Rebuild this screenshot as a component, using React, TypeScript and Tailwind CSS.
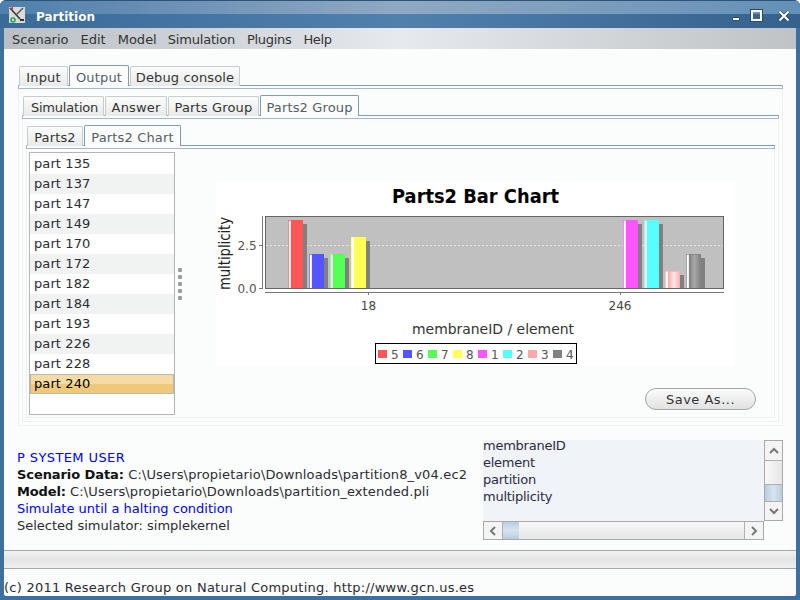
import React from "react";

const font = { fontFamily: '"DejaVu Sans", sans-serif' };

function Tab({ label, active, w, tight }: { label: string; active?: boolean; w: number; tight?: boolean }) {
  return (
    <div
      style={{ width: w }}
      className={
        active
          ? "h-[21px] pt-[3px] flex items-center justify-center rounded-t-[2px] border border-b-0 border-[#7f9bb6] bg-[#fbfdfd] text-[13px] text-[#555c66] relative z-10"
          : "h-[20px] mt-[1px] pt-[2px] flex items-center justify-center rounded-t-[2px] border border-b-0 border-[#c8cccc] bg-gradient-to-b from-[#fbfcfc] to-[#e8eaea] text-[13px] text-[#333]"
      }
    >
      <span className={tight ? "tracking-[-0.2px] pl-[2px]" : "tracking-[0.15px]"}>{label}</span>
    </div>
  );
}

function Panel({ children }: { children: React.ReactNode }) {
  return (
    <div className="border-x border-b border-[#eef1f1]">
      <div className="h-[4px] -mx-[1px] border border-b-0 border-t-[#7f9bb6] border-x-[#a9b9c8] bg-[#fbfdfd] shadow-[inset_0_-1px_0_#a5b8cb]" />
      {children}
    </div>
  );
}

const rows = ["135", "137", "147", "149", "170", "172", "182", "184", "193", "226", "228", "240"];

type Bar = { x: number; top: number; c: string; id: string };
const bars: Bar[] = [
  { x: 288, top: 220, c: "#ff5555", id: "a" },
  { x: 309, top: 254, c: "#5555ff", id: "b" },
  { x: 330, top: 254, c: "#55ff55", id: "c" },
  { x: 351, top: 237, c: "#ffff55", id: "d" },
  { x: 623, top: 220, c: "#ff55ff", id: "e" },
  { x: 644, top: 220, c: "#55ffff", id: "f" },
  { x: 665, top: 271, c: "#ffaaaa", id: "g" },
  { x: 686, top: 254, c: "#808080", id: "h" },
];
const legend = [
  ["5", "#ff5555"],
  ["6", "#5555ff"],
  ["7", "#55ff55"],
  ["8", "#ffff55"],
  ["1", "#ff55ff"],
  ["2", "#55ffff"],
  ["3", "#ffaaaa"],
  ["4", "#808080"],
];

function Chart() {
  return (
    <svg width={519} height={184} viewBox="216 182 519 184" className="block bg-white" style={font}>
      <defs>
        {bars.map((b) => (
          <linearGradient key={b.id} id={b.id} x1="0" x2="1" y1="0" y2="0">
            <stop offset="0" stopColor={b.c} stopOpacity="0.7" />
            <stop offset="0.07" stopColor={b.c} stopOpacity="0.7" />
            <stop offset="0.1" stopColor="#ffffff" />
            <stop offset="0.16" stopColor="#ffffff" />
            <stop offset="0.22" stopColor={b.c} />
            {b.id === "g" ? <stop offset="0.6" stopColor="#ffe8e8" /> : null}
            {b.id === "h" ? <stop offset="0.55" stopColor="#a8a8a8" /> : null}
            <stop offset="1" stopColor={b.c} />
          </linearGradient>
        ))}
      </defs>
      <text x="392" y="203" fontSize="20" fontWeight="700" fill="#000" textLength="167" lengthAdjust="spacingAndGlyphs">
        Parts2 Bar Chart
      </text>
      <rect x="265.5" y="216.5" width="458" height="72" fill="#c0c0c0" stroke="#666" />
      <line x1="266" x2="723" y1="245.5" y2="245.5" stroke="#e6e6e6" strokeDasharray="2 2" />
      <line x1="262.5" x2="262.5" y1="216" y2="289" stroke="#777" />
      <line x1="259" x2="262" y1="245.5" y2="245.5" stroke="#777" />
      <line x1="259" x2="262" y1="288.5" y2="288.5" stroke="#777" />
      <line x1="265" x2="724" y1="292.5" y2="292.5" stroke="#777" />
      <line x1="368.5" x2="368.5" y1="292" y2="295" stroke="#777" />
      <line x1="620.5" x2="620.5" y1="292" y2="295" stroke="#777" />
      {bars.map((b) => (
        <g key={b.id}>
          <rect x={b.x + 15} y={b.top + 4} width={4} height={288 - b.top - 4} fill="#808080" />
          <rect x={b.x} y={b.top} width={15} height={288 - b.top} fill="#ffffff" />
          <rect x={b.x} y={b.top} width={15} height={288 - b.top} fill={`url(#${b.id})`} />
          <rect x={b.x} y={b.top} width={15} height={1} fill={b.c} opacity="0.6" />
        </g>
      ))}
      <text x="247" y="250" fontSize="12" textAnchor="middle" fill="#555">2.5</text>
      <text x="247" y="293" fontSize="12" textAnchor="middle" fill="#555">0.0</text>
      <text x="368.5" y="310" fontSize="12" textAnchor="middle" fill="#444">18</text>
      <text x="620" y="310" fontSize="12" textAnchor="middle" fill="#444">246</text>
      <text
        transform="translate(230 290) rotate(-90)"
        fontSize="16"
        fill="#222"
        textLength="73"
        lengthAdjust="spacingAndGlyphs"
      >
        multiplicity
      </text>
      <text x="412" y="334" fontSize="14" fill="#333" textLength="162" lengthAdjust="spacingAndGlyphs">
        membraneID / element
      </text>
      <rect x="375.5" y="343.5" width="201" height="20" fill="#fff" stroke="#000" />
      {legend.map(([t, c], i) => (
        <g key={t}>
          <rect x={378 + i * 25} y={350} width={9} height={8} fill={c} />
          <text x={391 + i * 25} y={359} fontSize="12" fill="#555">{t}</text>
        </g>
      ))}
    </svg>
  );
}

function Chevron({ d }: { d: string }) {
  return (
    <svg width="12" height="12" viewBox="0 0 12 12">
      <path d={d} fill="none" stroke="#777" strokeWidth="2" />
    </svg>
  );
}

function TitleIcon() {
  return (
    <svg width="16" height="16" viewBox="0 0 16 16" className="block bg-[#d8dcd4]">
      <path d="M1 1L11 12" stroke="#333" strokeWidth="1.5" />
      <path d="M14 1L7 8" stroke="#555" strokeWidth="1.5" />
      <path d="M1 2L4 1" stroke="#c33" strokeWidth="2" />
      <circle cx="4" cy="13" r="2" fill="none" stroke="#2a9a6a" strokeWidth="1.5" />
      <path d="M11 12h4v2h-4z" fill="#333" />
    </svg>
  );
}

export default function App() {
  return (
    <div
      style={font}
      className="w-[800px] h-[600px] overflow-hidden flex flex-col bg-[#3d6f9f] rounded-t-[6px] text-[13px] text-[#2b2b33]"
    >
      <div className="h-[28px] relative flex items-start pt-[6px] pl-[9px] pr-[10px] bg-gradient-to-r from-[#3a6a98] via-[#5280ad] to-[#35628c] border-t border-[#2f5375]">
        <div className="absolute left-0 right-0 top-0 h-[13px] bg-gradient-to-r from-[#4f7fac] via-[#90a9c2] to-[#6390b8]" />
        <div className="relative">
          <TitleIcon />
        </div>
        <span className="relative ml-[11px] mt-[1px] text-[12px] font-bold text-white">Partition</span>
        <div className="relative ml-auto flex items-start">
          <div className="w-[8px] h-[4px] mt-[10px] bg-white border border-[#2b4a66] rounded-[1px]" />
          <div className="w-[11px] h-[11px] ml-[11px] mt-[3px] border-2 border-white outline outline-1 outline-[#2b4a66]" />
          <svg width="12" height="12" viewBox="0 0 12 12" className="ml-[16px] mt-[3px]">
            <path d="M1.5 1.5L10.5 10.5M10.5 1.5L1.5 10.5" stroke="#2b4a66" strokeWidth="3.4" />
            <path d="M1.5 1.5L10.5 10.5M10.5 1.5L1.5 10.5" stroke="#fff" strokeWidth="2" />
          </svg>
        </div>
      </div>
      <div className="mx-[4px] h-[21px] pt-[2px] flex items-center pl-[8px] bg-gradient-to-r from-[#b9bfc3] via-[#e6e9ed] to-[#bfc3c6] text-[13px] text-[#333]">
        <span>Scenario</span>
        <span className="ml-[12px]">Edit</span>
        <span className="ml-[12px]">Model</span>
        <span className="ml-[11px] tracking-[-0.2px]">Simulation</span>
        <span className="ml-[12px] tracking-[-0.3px]">Plugins</span>
        <span className="ml-[12px] tracking-[-0.4px]">Help</span>
      </div>
      <div className="mx-[4px] mb-[4px] flex-1 flex flex-col bg-[#fbfdfd] rounded-b-[2px]">
        <div className="pt-[16px] pl-[14px] pr-[13px]">
          <div className="flex gap-[1px] pl-[1px] h-[20px] items-start">
            <Tab label="Input" w={49} />
            <Tab label="Output" active w={60} />
            <Tab label="Debug console" w={110} />
          </div>
          <Panel>
            <div className="pt-[6px] px-[3px] pb-[3px]">
              <div className="flex gap-[1px] pl-[1px] h-[20px] items-start">
                <Tab label="Simulation" w={81} tight />
                <Tab label="Answer" w={62} />
                <Tab label="Parts Group" w={91} />
                <Tab label="Parts2 Group" active w={99} />
              </div>
              <Panel>
                <div className="pt-[6px] px-[3px] pb-[3px]">
                  <div className="flex gap-[1px] pl-[1px] h-[20px] items-start">
                    <Tab label="Parts2" w={56} />
                    <Tab label="Parts2 Chart" active w={97} />
                  </div>
                  <Panel>
                    <div className="pt-[3px] pl-[2px] pb-[2px] flex h-[268px]">
                      <div className="w-[146px] h-[263px] border border-[#b4b6b6] bg-white flex flex-col pt-[1px] tracking-[0.1px]">
                        {rows.map((r, i) => (
                          <div
                            key={r}
                            className={
                              i === 11
                                ? "h-[20px] shrink-0 pl-[3px] flex items-center text-black border border-[#b8b8b0] bg-gradient-to-b from-[#f6dca4] from-50% to-[#efc878] to-50%"
                                : i % 2 === 1
                                ? "h-[20px] shrink-0 pl-[4px] flex items-center bg-[#f1f3f2]"
                                : "h-[20px] shrink-0 pl-[4px] flex items-center bg-white"
                            }
                          >
                            part {r}
                          </div>
                        ))}
                      </div>
                      <div className="w-[41px] h-[263px] flex flex-col items-start justify-center gap-[3px] pl-[3px]">
                        {[0, 1, 2, 3, 4].map((i) => (
                          <div key={i} className="w-[4px] h-[4px] bg-[#9c9e9e] rounded-[1px]" />
                        ))}
                      </div>
                      <div className="flex-1 flex flex-col pt-[30px]">
                        <Chart />
                        <div className="mt-[22px] flex justify-end pr-[18px]">
                          <div className="w-[111px] h-[22px] pt-[1px] rounded-full border border-[#a4a6a6] bg-gradient-to-b from-[#fbfbfb] to-[#e2e2e2] flex items-center justify-center text-[13px] text-[#333] tracking-[0.5px]">
                            Save As...
                          </div>
                        </div>
                      </div>
                    </div>
                  </Panel>
                </div>
              </Panel>
            </div>
          </Panel>
        </div>
        <div className="mt-[14px] h-[100px] flex pl-[13px] pr-[13px]">
          <div className="flex-1 pt-[9px] leading-[17px]">
            <div className="text-[#0000ff] tracking-[0.4px]">P SYSTEM USER</div>
            <div className="whitespace-nowrap tracking-[0.15px]"><b className="text-[#111] tracking-[-0.08px]">Scenario Data:</b> C:\Users\propietario\Downloads\partition8_v04.ec2</div>
            <div className="whitespace-nowrap tracking-[0.13px]"><b className="text-[#111] tracking-[-0.15px]">Model:</b> C:\Users\propietario\Downloads\partition_extended.pli</div>
            <div className="text-[#0000ff]">Simulate until a halting condition</div>
            <div>Selected simulator: simplekernel</div>
          </div>
          <div className="w-[300px] flex flex-col shrink-0">
            <div className="flex h-[81px]">
              <div className="w-[281px] h-[81px] overflow-hidden bg-[#f0f3f7] leading-[17px] text-[#2b2b44] tracking-[-0.25px]">
                <div className="-mt-[3px]">membraneID</div>
                <div>element</div>
                <div>partition</div>
                <div>multiplicity</div>
              </div>
              <div className="w-[19px] flex flex-col border border-[#a8aaaa]">
                <div className="h-[19px] flex items-center justify-center bg-[#f4f4f4]"><Chevron d="M2 8L6 4L10 8" /></div>
                <div className="flex-1 border-y border-[#b0b0b0] bg-gradient-to-r from-[#f8f8f8] to-[#e6e6e6]" />
                <div className="h-[16px] bg-gradient-to-r from-[#b9cde0] via-[#d8e4ef] to-[#b9cde0]" />
                <div className="h-[19px] flex items-center justify-center border-t border-[#b0b0b0] bg-[#f4f4f4]"><Chevron d="M2 4L6 8L10 4" /></div>
              </div>
            </div>
            <div className="w-[281px] h-[19px] flex border border-[#a8aaaa]">
              <div className="w-[19px] flex items-center justify-center border-r border-[#b0b0b0] bg-[#f4f4f4]"><Chevron d="M8 2L4 6L8 10" /></div>
              <div className="w-[16px] bg-gradient-to-b from-[#b9cde0] via-[#d8e4ef] to-[#b9cde0]" />
              <div className="flex-1 bg-gradient-to-b from-[#f8f8f8] to-[#e6e6e6]" />
              <div className="w-[19px] flex items-center justify-center border-l border-[#b0b0b0] bg-[#f4f4f4]"><Chevron d="M4 2L8 6L4 10" /></div>
            </div>
          </div>
        </div>
        <div className="mt-[10px] h-[19px] border-y border-[#a6a8a8] bg-gradient-to-b from-[#f2f2f2] via-[#e4e4e4] to-[#f0f0f0]" />
        <div className="flex-1 flex items-end leading-[17px] whitespace-nowrap tracking-[0.24px]">
          (c) 2011 Research Group on Natural Computing. http://www.gcn.us.es
        </div>
      </div>
    </div>
  );
}
